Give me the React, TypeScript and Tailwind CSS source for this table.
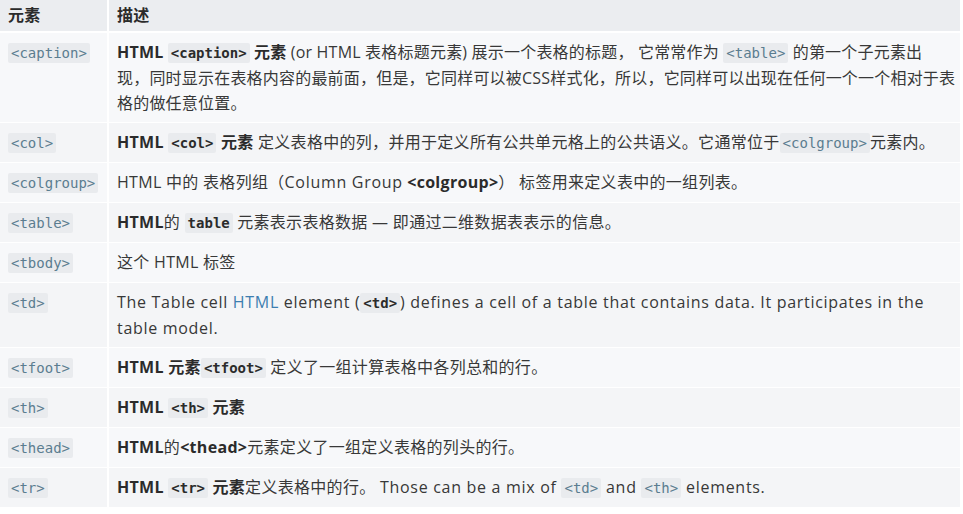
import React from "react";

const sans = "font-['Open_Sans','Noto_Sans_CJK_SC',sans-serif]";

function Code(p: { children: React.ReactNode; bold?: boolean }) {
  return (
    <code
      className={
        "font-['DejaVu_Sans_Mono','Liberation_Mono',monospace] tracking-normal text-[14px] bg-[#e9ebee] rounded-[2px] px-[3px] py-[2px] " +
        (p.bold ? "font-bold text-[#2b2b2b]" : "text-[#5b7d90]")
      }
    >
      {p.children}
    </code>
  );
}

function B(p: { children: React.ReactNode }) {
  return <strong className="font-bold text-[#2b2b2b]">{p.children}</strong>;
}

// english runs render a bit wider in the reference
function En(p: { children: React.ReactNode }) {
  return <span className="tracking-[0.7px]">{p.children}</span>;
}

const rows: { tag: string; desc: React.ReactNode }[] = [
  {
    tag: "<caption>",
    desc: (
      <span className="tracking-[0.2px]">
        <B>HTML</B> <Code bold>{"<caption>"}</Code> <B>元素</B> (or HTML 表格标题元素) 展示一个表格的标题， 它常常作为{" "}
        <Code>{"<table>"}</Code> 的第一个子元素出
        <br />
        现，同时显示在表格内容的最前面，但是，它同样可以被CSS样式化，所以，它同样可以出现在任何一个一个相对于表
        <br />
        格的做任意位置。
      </span>
    ),
  },
  {
    tag: "<col>",
    desc: (
      <>
        <B>HTML</B> <Code bold>{"<col>"}</Code> <B>元素</B> 定义表格中的列，并用于定义所有公共单元格上的公共语义。它通常位于
        <Code>{"<colgroup>"}</Code>元素内。
      </>
    ),
  },
  {
    tag: "<colgroup>",
    desc: (
      <>
        HTML 中的 表格列组（<En>Column Group</En> <B>{"<colgroup>"}</B>） 标签用来定义表中的一组列表。
      </>
    ),
  },
  {
    tag: "<table>",
    desc: (
      <>
        <B>HTML</B>的 <Code bold>table</Code> 元素表示表格数据 — 即通过二维数据表表示的信息。
      </>
    ),
  },
  { tag: "<tbody>", desc: <>这个 HTML 标签</> },
  {
    tag: "<td>",
    desc: (
      <En>
        The Table cell <span className="text-[#3d7eb0]">HTML</span> element (<Code bold>{"<td>"}</Code>) defines a cell of a table that contains data. It participates in the table model.
      </En>
    ),
  },
  {
    tag: "<tfoot>",
    desc: (
      <>
        <B>HTML 元素</B>
        <Code bold>{"<tfoot>"}</Code> 定义了一组计算表格中各列总和的行。
      </>
    ),
  },
  {
    tag: "<th>",
    desc: (
      <>
        <B>HTML</B> <Code bold>{"<th>"}</Code> <B>元素</B>
      </>
    ),
  },
  {
    tag: "<thead>",
    desc: (
      <>
        <B>HTML</B>的<B>{"<thead>"}</B>元素定义了一组定义表格的列头的行。
      </>
    ),
  },
  {
    tag: "<tr>",
    desc: (
      <>
        <B>HTML</B> <Code bold>{"<tr>"}</Code> <B>元素</B>定义表格中的行。{" "}
        <En>
          Those can be a mix of <Code>{"<td>"}</Code> and <Code>{"<th>"}</Code> elements.
        </En>
      </>
    ),
  },
];

export default function App() {
  return (
    <div className={"bg-white w-[963px] h-[514px] overflow-hidden " + sans}>
      <table className="w-[960px] border-collapse text-[16px] leading-[25px] tracking-[0.3px] text-[#383838]">
        <thead>
          <tr className="bg-[#ebedf0]">
            <th className="w-[108px] text-left font-bold text-[#2b2b2b] px-[8px] py-[3px] border-b-2 border-r-2 border-white">
              元素
            </th>
            <th className="text-left font-bold text-[#2b2b2b] px-[8px] py-[3px] border-b-2 border-white">
              描述
            </th>
          </tr>
        </thead>
        <tbody>
          {rows.map((r, i) => (
            <tr key={r.tag} className={i % 2 === 1 ? "bg-[#f4f5f7]" : "bg-[#f7f8fa]"}>
              <td className="align-top px-[8px] pt-[7px] pb-[6px] border-b border-r-2 border-white">
                <Code>{r.tag}</Code>
              </td>
              <td className="align-top pl-[8px] pr-[4px] pt-[7px] pb-[6px] border-b border-white">{r.desc}</td>
            </tr>
          ))}
        </tbody>
      </table>
    </div>
  );
}
